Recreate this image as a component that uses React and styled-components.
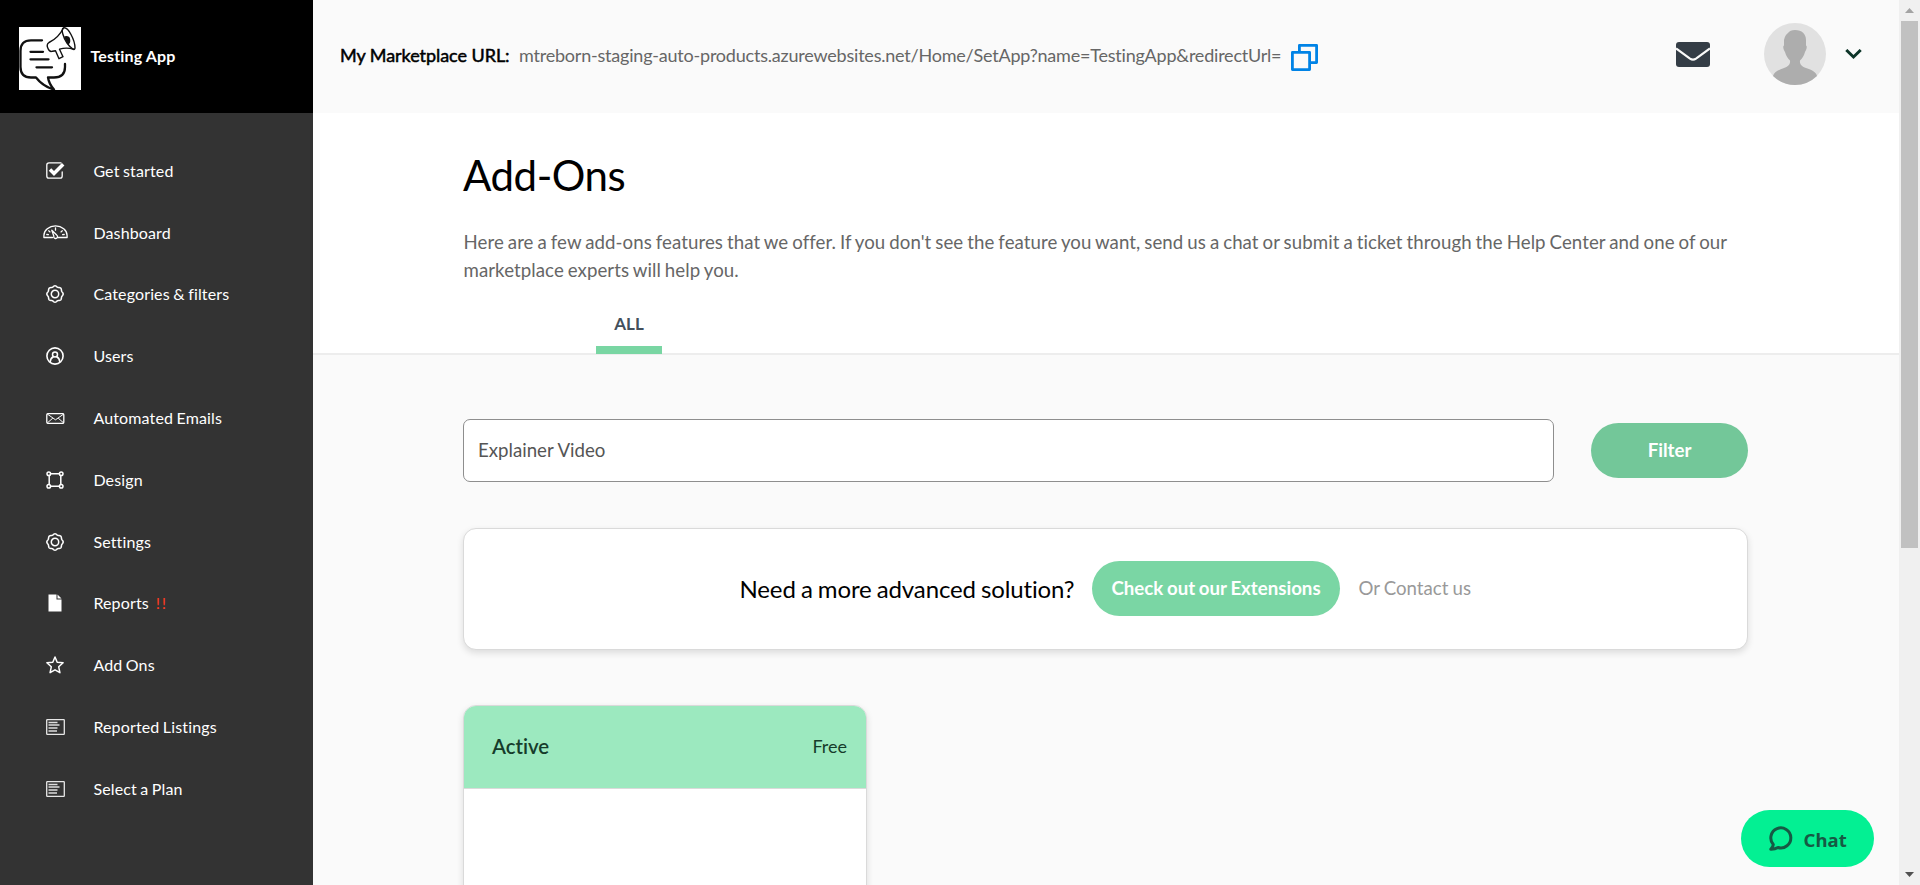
import React from 'react';
import styled, { createGlobalStyle } from 'styled-components';

const GlobalStyle = createGlobalStyle`
  *, *::before, *::after { box-sizing: border-box; }
  body { margin: 0; overflow: hidden; background: #fafafa; font-family: Lato, "Open Sans", sans-serif; font-size: 16px; font-variant-ligatures: none; color: #000; }
  svg { display: block; flex: none; }
  h1, p { margin: 0; font-weight: 400; }
  button, input { font-family: inherit; }
`;

const Page = styled.div`
  display: grid;
  grid-template-columns: 313px 1fr 21px;
  height: 885px;
  overflow: hidden;
`;

const Sidebar = styled.aside`
  background: #333;
`;

const Brand = styled.div`
  display: flex;
  align-items: center;
  gap: 9px;
  height: 113px;
  padding: 4px 0 0 19px;
  background: #000;
  color: #fff;
  font-weight: 700;
  line-height: 20px;
  letter-spacing: 0.14px;
`;

const BrandName = styled.span`
  padding: 0 0 5px 0.5px;
`;

const Nav = styled.nav`
  padding-top: 27px;
`;

const NavItem = styled.a`
  display: flex;
  align-items: center;
  height: 61.8px;
  padding-left: 35px;
  color: #fff;
  line-height: 20px;
  letter-spacing: 0.14px;
  word-spacing: -0.8px;
`;

const NavIcon = styled.span`
  display: flex;
  justify-content: center;
  width: 40px;
  margin-right: 18.4px;
`;

const Alert = styled.span`
  margin-left: 7px;
  color: #ff3b1f;
  letter-spacing: 1.6px;
`;

const Main = styled.main`
  display: flex;
  flex-direction: column;
  min-width: 0;
  overflow: hidden;
`;

const TopBar = styled.header`
  display: flex;
  align-items: center;
  flex: none;
  height: 113px;
  padding: 0 37px 5px 27px;
  font-size: 18px;
`;

const UrlLabel = styled.span`
  width: 179px;
  padding-top: 2px;
  letter-spacing: -0.05px;
  -webkit-text-stroke: 0.5px #000;
  white-space: nowrap;
`;

const Url = styled.span`
  width: 772px;
  padding-top: 2px;
  color: #666;
  letter-spacing: -0.21px;
  white-space: nowrap;
`;

const CopyIcon = styled.svg`
  margin-top: 7px;
`;

const MailIcon = styled.svg`
  margin-left: auto;
`;

const Avatar = styled.svg`
  margin: 0 19px 0 54px;
`;

const Intro = styled.section`
  flex: none;
  height: 242px;
  padding: 35px 150px 0;
  background: #fff;
  border-bottom: 2px solid #ededed;
`;

const Title = styled.h1`
  height: 80px;
  font-size: 42px;
  line-height: 54px;
  letter-spacing: -0.45px;
`;

const Lead = styled.p`
  height: 82px;
  padding-left: 0.5px;
  color: #666;
  font-size: 18.67px;
  line-height: 28px;
  letter-spacing: 0.07px;
  word-spacing: -0.9px;
  white-space: nowrap;
`;

const Tab = styled.div`
  width: 66px;
  height: 44px;
  margin-left: 133px;
  border-bottom: 8px solid #79d6a3;
  color: #43505c;
  font-size: 17px;
  font-weight: 700;
  line-height: 28px;
  text-align: center;
`;

const Content = styled.section`
  padding: 64px 151px 0 150px;
`;

const FilterRow = styled.div`
  display: flex;
  align-items: center;
  gap: 37px;
`;

const SearchInput = styled.input`
  flex: 1;
  height: 63px;
  padding: 0 14px 1px;
  border: 1px solid #8e8e8e;
  border-radius: 7px;
  background: #fff;
  color: #555;
  font-size: 18.67px;
`;

const PillButton = styled.button`
  width: ${({ $width }) => $width}px;
  height: 55px;
  padding: 0 0 1px;
  border: 0;
  border-radius: 28px;
  background: ${({ $muted }) => ($muted ? '#73c799' : '#7ad6a4')};
  color: #fff;
  font-size: 18.67px;
  font-weight: 700;
  word-spacing: -0.8px;
  white-space: nowrap;
`;

const Card = styled.div`
  border: 1px solid #dadada;
  border-radius: 13px;
  background: #fff;
  box-shadow: 0 3px 7px rgba(0, 0, 0, 0.12);
  overflow: hidden;
`;

const Promo = styled(Card)`
  display: flex;
  align-items: center;
  height: 122px;
  margin-top: 46px;
  padding: 0 0 2px 275.5px;
`;

const PromoText = styled.span`
  width: 352.5px;
  font-size: 24px;
  letter-spacing: -0.14px;
  word-spacing: -0.8px;
  white-space: nowrap;
`;

const ContactLink = styled.a`
  margin-left: 18.5px;
  color: #999;
  font-size: 18.67px;
  word-spacing: -0.7px;
`;

const AddOn = styled(Card)`
  width: 404px;
  height: 300px;
  margin-top: 55px;
`;

const AddOnHeader = styled.div`
  display: flex;
  align-items: center;
  justify-content: space-between;
  height: 83px;
  padding: 0 19px 2px 28px;
  border-bottom: 1px solid #dadada;
  background: #9ce9bf;
  color: #163c2b;
`;

const Status = styled.span`
  font-size: 20.4px;
  font-weight: 600;
`;

const Price = styled.span`
  font-size: 18px;
`;

const Scrollbar = styled.div`
  display: flex;
  flex-direction: column;
  align-items: center;
  height: 885px;
  background: #f0f0f0;
`;

const ScrollArrow = styled.div`
  display: flex;
  align-items: center;
  justify-content: center;
  height: 21px;
`;

const ScrollThumb = styled.div`
  width: 17px;
  height: 527px;
  margin-bottom: auto;
  background: #c1c1c1;
`;

const ChatButton = styled.button`
  position: fixed;
  right: 46px;
  bottom: 18px;
  display: flex;
  align-items: center;
  gap: 11px;
  width: 133px;
  height: 57px;
  padding: 0 0 0 27.5px;
  border: 0;
  border-radius: 29px;
  background: #03f093;
  color: #165a44;
  font: 700 18.5px "Noto Sans", sans-serif;
  letter-spacing: 0.1px;
`;

const ChatLabel = styled.span`
  padding-top: 1px;
`;

const line = { fill: 'none', stroke: '#fff', strokeWidth: 1.3, strokeLinecap: 'round', strokeLinejoin: 'round' };

const gearOutline = (() => {
  const steps = 96;
  const points = Array.from({ length: steps }, (_, i) => {
    const a = (i / steps) * Math.PI * 2;
    const r = 7.7 + 0.5 * Math.cos(8 * a);
    return `${(9 + r * Math.sin(a)).toFixed(2)} ${(9 - r * Math.cos(a)).toFixed(2)}`;
  });
  return `M${points.join('L')}Z`;
})();

const CheckIcon = () => (
  <svg width="19" height="17" viewBox="0 0 19 17">
    <path d="M15 .8H3Q.8.8.8 3v11q0 2.200 2.200 2.200h11q2.200 0 2.200-2.200v-4" {...line} />
    <path d="M4 7.500l4 4L17.200 2.300" fill="none" stroke="#fff" strokeWidth="3.500" />
  </svg>
);

const GaugeIcon = () => (
  <svg width="25" height="15" viewBox="0 0 25 15">
    <path d="M9.500 12.500H.9V10.500a11.600 9.700 0 0 1 23.200 0v2H14.500M12.500 2.800v2.400M5.700 5.800l1.300 1.100M19.300 5.800L18 6.900M3.800 9.500l1.600.2M21.200 9.500l-1.600.2" {...line} />
    <path d="M8.800 5.200l2 5.800a1.900 1.900 0 1 0 2.900-1z" {...line} />
  </svg>
);

const GearIcon = () => (
  <svg width="18" height="18" viewBox="0 0 18 18">
    <path d={gearOutline} {...line} strokeWidth="1.500" />
    <circle cx="9" cy="9" r="3.700" {...line} strokeWidth="1.500" />
  </svg>
);

const UserIcon = () => (
  <svg width="18" height="18" viewBox="0 0 18 18">
    <circle cx="9" cy="9" r="8.100" {...line} strokeWidth="1.600" />
    <circle cx="9" cy="7.600" r="2.500" {...line} strokeWidth="1.500" />
    <path d="M4.200 14.900q.3-3.900 3.200-5.100M13.800 14.900q-.3-3.900-3.200-5.100" {...line} strokeWidth="1.500" />
  </svg>
);

const EnvelopeIcon = () => (
  <svg width="19" height="11" viewBox="0 0 19 11">
    <rect x=".8" y=".7" width="17" height="9.600" rx="1" {...line} />
    <path d="M1.500 1.200l8 5.600 8-5.600M1.500 9.800l5-4.400M17.500 9.800l-5-4.400" {...line} strokeWidth="1" />
  </svg>
);

const FrameIcon = () => (
  <svg width="18" height="18" viewBox="0 0 18 18">
    <path d="M4.500 2.700h9M4.500 15.300h9M3.200 4.500v9M14.800 4.500v9" {...line} strokeWidth="1.500" />
    {[[2.800, 2.700], [15.200, 2.700], [2.800, 15.300], [15.200, 15.300]].map(([x, y]) => (
      <circle key={`${x}-${y}`} cx={x} cy={y} r="1.800" {...line} strokeWidth="1.500" />
    ))}
  </svg>
);

const FileIcon = () => (
  <svg width="14" height="18" viewBox="0 0 14 18">
    <path d="M.5.500h8v5h5v12H.5z" fill="#fff" />
    <path d="M9.500.500v4h4z" fill="#fff" />
  </svg>
);

const StarIcon = () => (
  <svg width="18" height="18" viewBox="0 0 18 18">
    <path d="M9 1l2.200 5.200 5.900.6-4.400 4 1.200 5.900L9 13.800l-4.900 2.900 1.200-5.900-4.400-4 5.900-.6z" {...line} strokeWidth="1.500" />
  </svg>
);

const ListIcon = () => (
  <svg width="19" height="16" viewBox="0 0 19 16">
    <rect x=".7" y=".7" width="17.600" height="14.600" rx=".6" {...line} stroke="#e6e6e6" />
    <path d="M2.500 3.500h9M2.500 6h11M2.500 9h9M2.500 12h8.500" stroke="#ddd" strokeWidth="1.500" fill="none" />
  </svg>
);

const BrandLogo = () => (
  <svg width="62" height="63" viewBox="0 0 62 63">
    <rect width="62" height="63" fill="#fff" />
    <g fill="none" stroke="#111" strokeWidth="2.300" strokeLinejoin="round" strokeLinecap="round">
      <path d="M23 13.300H12Q1.500 13.300 1.500 24v16q0 10.500 10.500 10.500h5q7 9 18 12-5-5.500-6-12h6q11 0 11-10.500v-3" />
      <path d="M11.500 24.800H24M11.500 32.300h18M17.500 40.300H33" />
      <g strokeWidth="1.400">
        <path d="M44.500 1q-5 10-14.500 14.500-3 2-1 6 1.500 3.800 4.500 2.700l3-.5 3.500 8 4-2-3.500-7.500Q48 20 55 22.500" />
        <path d="M44.500 1c-3 1 0 10 3.500 15s8 8 8 5-1-8-4-13.500S47 0 44.500 1z" />
        <path d="M46 10q4-1 4.500 2.500t-1.500 4z" fill="#111" />
      </g>
    </g>
  </svg>
);

const NAV = [
  ['Get started', CheckIcon],
  ['Dashboard', GaugeIcon],
  ['Categories & filters', GearIcon],
  ['Users', UserIcon],
  ['Automated Emails', EnvelopeIcon],
  ['Design', FrameIcon],
  ['Settings', GearIcon],
  ['Reports', FileIcon, '!!'],
  ['Add Ons', StarIcon],
  ['Reported Listings', ListIcon],
  ['Select a Plan', ListIcon],
];

export default function App() {
  return (
    <>
      <GlobalStyle />
      <Page>
        <Sidebar>
          <Brand>
            <BrandLogo />
            <BrandName>Testing App</BrandName>
          </Brand>
          <Nav>
            {NAV.map(([label, Icon, alert]) => (
              <NavItem key={label}>
                <NavIcon><Icon /></NavIcon>
                {label}
                {alert && <Alert>{alert}</Alert>}
              </NavItem>
            ))}
          </Nav>
        </Sidebar>
        <Main>
          <TopBar>
            <UrlLabel>My Marketplace URL:</UrlLabel>
            <Url>mtreborn-staging-auto-products.azurewebsites.net/Home/SetApp?name=TestingApp&amp;redirectUrl=</Url>
            <CopyIcon width="27" height="27" viewBox="0 0 27 27" fill="none" stroke="#0083e6" strokeWidth="2.800" strokeLinejoin="round">
              <path d="M8.400 7V1.400h17.200v17.200H20" />
              <rect x="1.400" y="8.400" width="17.200" height="17.200" />
            </CopyIcon>
            <MailIcon width="34" height="25" viewBox="0 0 34 25">
              <rect width="34" height="25" rx="3" fill="#343d46" />
              <path d="M0 6.500L14 16.700q3 2 6 0L34 6.500" fill="none" stroke="#fafafa" strokeWidth="2.200" />
            </MailIcon>
            <Avatar width="62" height="62" viewBox="0 0 62 62">
              <circle cx="31" cy="31" r="31" fill="#e1e1e1" />
              <path d="M31 7c7 0 11 4 11 10v5.500c1.500.5.500 4.500-1 6.500-1 4-3 6.500-5 8.500-.5 4 2 6 6 7.500 6 2 10 4 11 8q-9.500 9-22 9T9 53c1-4 5-6 11-8 4-1.500 6.500-3.500 6-7.500-2-2-4-4.500-5-8.500-1.500-2-2.500-6-1-6.500V17q1-5 4-7 2-3 7-3z" fill="#adadad" />
            </Avatar>
            <svg width="17" height="11" viewBox="0 0 17 11">
              <path d="M1.300 1l7.200 7 7.200-7" fill="none" stroke="#0d3529" strokeWidth="3" />
            </svg>
          </TopBar>
          <Intro>
            <Title>Add-Ons</Title>
            <Lead>
              Here are a few add-ons features that we offer. If you don't see the feature you want, send us a chat or submit a ticket through the Help Center and one of our
              <br />
              marketplace experts will help you.
            </Lead>
            <Tab>ALL</Tab>
          </Intro>
          <Content>
            <FilterRow>
              <SearchInput defaultValue="Explainer Video" />
              <PillButton $width={157} $muted>Filter</PillButton>
            </FilterRow>
            <Promo>
              <PromoText>Need a more advanced solution?</PromoText>
              <PillButton $width={248}>Check out our Extensions</PillButton>
              <ContactLink>Or Contact us</ContactLink>
            </Promo>
            <AddOn>
              <AddOnHeader>
                <Status>Active</Status>
                <Price>Free</Price>
              </AddOnHeader>
            </AddOn>
          </Content>
        </Main>
        <Scrollbar>
          <ScrollArrow>
            <svg width="9" height="5" viewBox="0 0 9 5"><path d="M0 5l4.500-5L9 5z" fill="#a3a3a3" /></svg>
          </ScrollArrow>
          <ScrollThumb />
          <ScrollArrow>
            <svg width="9" height="5" viewBox="0 0 9 5"><path d="M0 0l4.500 5L9 0z" fill="#505050" /></svg>
          </ScrollArrow>
        </Scrollbar>
        <ChatButton>
          <svg width="24" height="25" viewBox="0 0 24 25" fill="none" stroke="#165a44" strokeWidth="3" strokeLinejoin="round" strokeLinecap="round">
            <path d="M4.300 18.500A10 10 0 1 1 9 21.500q-3 1.800-7.300 1.700 2.300-1.500 2.600-4.700z" />
          </svg>
          <ChatLabel>Chat</ChatLabel>
        </ChatButton>
      </Page>
    </>
  );
}
